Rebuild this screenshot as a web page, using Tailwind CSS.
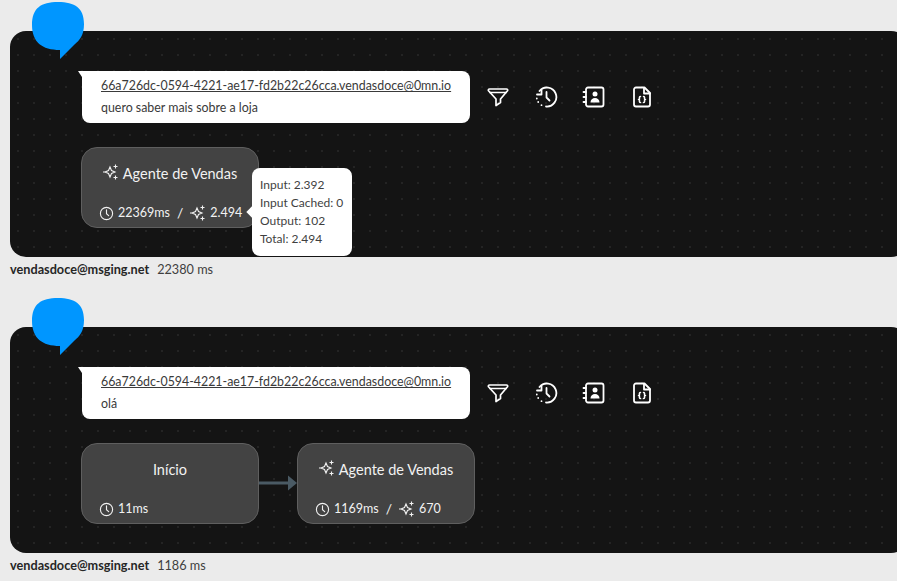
<!DOCTYPE html>
<html lang="pt">
<head>
  <meta charset="UTF-8" />
  <meta name="viewport" content="width=device-width, initial-scale=1.0"/>
  <title>Logs</title>
  <script src="https://cdn.jsdelivr.net/npm/@tailwindcss/browser@4"></script>
</head>
<body class="bg-[#ebebeb] font-['Lato',sans-serif] h-[581px] overflow-hidden">
  <main class="pl-[10px] pt-[31px] flex flex-col gap-[70px] w-[907px]">

    <!-- item 1 -->
    <section class="relative h-[226px]">
      <svg class="absolute left-[22px] top-[-29px] z-10" width="52" height="58" viewBox="0 0 52 58"><path d="M26 0C43 0 52 6 52 22C52 33 48 38 42 43L28 57V48C10 48 0 40 0 23C0 6 9 0 26 0Z" fill="#0096ff"/></svg>
      <div class="h-[226px] rounded-2xl bg-[#141414] bg-[radial-gradient(#242424_1px,transparent_1px)] bg-[length:16px_16px] pl-[72px] pt-[40px]">
        <div class="flex items-center">
          <div class="relative w-[388px] h-[52px] bg-white rounded-lg rounded-tl-none pl-[19px] pt-[5px] text-[12.4px] leading-[20px] text-[#3a3a3a]">
            <span class="absolute left-[-4px] top-0 w-0 h-0 border-t-[6px] border-t-white border-l-[4px] border-l-transparent"></span>
            <p class="underline whitespace-nowrap">66a726dc-0594-4221-ae17-fd2b22c26cca.vendasdoce@0mn.io</p>
            <p class="mt-[2px]">quero saber mais sobre a loja</p>
          </div>
          <div class="flex gap-[24px] ml-[16px] text-white">
            <svg class="size-6" viewBox="0 0 24 24" fill="none" stroke="currentColor" stroke-width="1.7" stroke-linejoin="round" stroke-linecap="round"><path d="M3.500 4h17c1 0 1.500 1 1 1.800L14.500 14v3.500l-4.500 3V14L2.500 5.800C2 5 2.500 4 3.500 4Z"/><path d="M4 7.500h16"/></svg>
            <svg class="size-6" viewBox="0 0 24 24" fill="none" stroke="currentColor" stroke-width="1.800" stroke-linejoin="round" stroke-linecap="round"><path d="M5.500 6A9.500 9.500 0 1 1 12 21.500"/><path d="M3 9.500h4.500V5"/><path d="M12.500 7v5.500l3 3"/><path d="M2.800 13.500v.01M4.200 17v.01M7.500 20.200v.01"/></svg>
            <svg class="size-6" viewBox="0 0 24 24" fill="none" stroke="currentColor" stroke-width="1.800" stroke-linejoin="round" stroke-linecap="round"><rect x="4" y="2.500" width="17.500" height="19" rx="2"/><path d="M1.500 7H4M1.500 12H4M1.500 17H4"/><circle cx="13" cy="9" r="2.500" fill="currentColor" stroke="none"/><path d="M8.500 17.500c0-3 2-4.500 4.500-4.500s4.500 1.500 4.500 4.500Z" fill="currentColor" stroke="none"/></svg>
            <svg class="size-6" viewBox="0 0 24 24" fill="none" stroke="currentColor" stroke-width="1.800" stroke-linejoin="round" stroke-linecap="round"><path d="M14.500 2.500H6a2 2 0 0 0-2 2v15a2 2 0 0 0 2 2h12a2 2 0 0 0 2-2V8Z"/><path d="M14 3v5.500h6"/><path d="M10.500 11.500c-1.500 0-1 2-1 2.500s-.5.500-1 .5c.5 0 1 0 1 .5s-.5 2.500 1 2.500M13.500 11.500c1.500 0 1 2 1 2.500s.5.500 1 .5c-.5 0-1 0-1 .5s.5 2.500-1 2.500" stroke-width="1.500"/></svg>
          </div>
        </div>
        <div class="relative ml-[-1px] mt-[24px] w-[178px] h-[81px] flex flex-col justify-between pt-[16px] pb-[4px] rounded-2xl bg-[#434343] border border-[#5f5f5f] text-[#f2f2f2]">
          <div class="flex justify-center items-center gap-[4px] text-[14.5px] leading-[20px]">
            <svg class="size-[16px] mt-[-4px]" viewBox="0 0 16 16" fill="none" stroke="currentColor" stroke-width="1.100"><path d="M7 3 8.500 6.500 12 8 8.500 9.500 7 13 5.500 9.500 2 8 5.500 6.500Z"/><path d="M12.500 .5v4M10.500 2.500h4M12.500 11.500v4M10.500 13.500h4M0 8h1.500"/></svg>
            <span>Agente de Vendas</span>
          </div>
          <div class="flex items-center gap-[4px] pl-[17px] text-[12.5px] leading-[20px]">
            <svg class="size-[15px]" viewBox="0 0 16 16" fill="none" stroke="currentColor" stroke-width="1.200" stroke-linecap="round"><circle cx="8" cy="8" r="6.500"/><path d="M8 4v4.300l2.300 2"/></svg>
            <span>22369ms</span>
            <span class="mx-[3px] text-[14px]">/</span>
            <svg class="size-[16px]" viewBox="0 0 16 16" fill="none" stroke="currentColor" stroke-width="1.100"><path d="M7 3 8.500 6.500 12 8 8.500 9.500 7 13 5.500 9.500 2 8 5.500 6.500Z"/><path d="M12.500 .5v4M10.500 2.500h4M12.500 11.500v4M10.500 13.500h4M0 8h1.500"/></svg>
            <span>2.494</span>
          </div>
          <div class="absolute left-[170px] top-[20px] z-10 w-[100px] h-[88px] bg-white rounded-lg pl-[8px] pt-[8px] text-[12px] leading-[18px] text-[#3f3f3f]">
            <span class="absolute left-[-4px] top-[40px] size-[8px] rotate-45 bg-white"></span>
            <p>Input: 2.392</p>
            <p class="whitespace-nowrap">Input Cached: 0</p>
            <p>Output: 102</p>
            <p>Total: 2.494</p>
          </div>
        </div>
      </div>
      <p class="mt-[4px] text-[12.7px] leading-[17px] text-[#3f3f3f]"><b class="text-[#262626]">vendasdoce@msging.net</b><span class="ml-[8px]">22380 ms</span></p>
    </section>

    <!-- item 2 -->
    <section class="relative h-[226px]">
      <svg class="absolute left-[22px] top-[-29px] z-10" width="52" height="58" viewBox="0 0 52 58"><path d="M26 0C43 0 52 6 52 22C52 33 48 38 42 43L28 57V48C10 48 0 40 0 23C0 6 9 0 26 0Z" fill="#0096ff"/></svg>
      <div class="h-[226px] rounded-2xl bg-[#141414] bg-[radial-gradient(#242424_1px,transparent_1px)] bg-[length:16px_16px] pl-[72px] pt-[40px]">
        <div class="flex items-center">
          <div class="relative w-[388px] h-[52px] bg-white rounded-lg rounded-tl-none pl-[19px] pt-[5px] text-[12.4px] leading-[20px] text-[#3a3a3a]">
            <span class="absolute left-[-4px] top-0 w-0 h-0 border-t-[6px] border-t-white border-l-[4px] border-l-transparent"></span>
            <p class="underline whitespace-nowrap">66a726dc-0594-4221-ae17-fd2b22c26cca.vendasdoce@0mn.io</p>
            <p class="mt-[2px]">olá</p>
          </div>
          <div class="flex gap-[24px] ml-[16px] text-white">
            <svg class="size-6" viewBox="0 0 24 24" fill="none" stroke="currentColor" stroke-width="1.7" stroke-linejoin="round" stroke-linecap="round"><path d="M3.500 4h17c1 0 1.500 1 1 1.800L14.500 14v3.500l-4.500 3V14L2.500 5.800C2 5 2.500 4 3.500 4Z"/><path d="M4 7.500h16"/></svg>
            <svg class="size-6" viewBox="0 0 24 24" fill="none" stroke="currentColor" stroke-width="1.800" stroke-linejoin="round" stroke-linecap="round"><path d="M5.500 6A9.500 9.500 0 1 1 12 21.500"/><path d="M3 9.500h4.500V5"/><path d="M12.500 7v5.500l3 3"/><path d="M2.800 13.500v.01M4.200 17v.01M7.500 20.200v.01"/></svg>
            <svg class="size-6" viewBox="0 0 24 24" fill="none" stroke="currentColor" stroke-width="1.800" stroke-linejoin="round" stroke-linecap="round"><rect x="4" y="2.500" width="17.500" height="19" rx="2"/><path d="M1.500 7H4M1.500 12H4M1.500 17H4"/><circle cx="13" cy="9" r="2.500" fill="currentColor" stroke="none"/><path d="M8.500 17.500c0-3 2-4.500 4.500-4.500s4.500 1.500 4.500 4.500Z" fill="currentColor" stroke="none"/></svg>
            <svg class="size-6" viewBox="0 0 24 24" fill="none" stroke="currentColor" stroke-width="1.800" stroke-linejoin="round" stroke-linecap="round"><path d="M14.500 2.500H6a2 2 0 0 0-2 2v15a2 2 0 0 0 2 2h12a2 2 0 0 0 2-2V8Z"/><path d="M14 3v5.500h6"/><path d="M10.500 11.500c-1.500 0-1 2-1 2.500s-.5.500-1 .5c.5 0 1 0 1 .5s-.5 2.500 1 2.500M13.500 11.500c1.500 0 1 2 1 2.500s.5.500 1 .5c-.5 0-1 0-1 .5s.5 2.500-1 2.500" stroke-width="1.500"/></svg>
          </div>
        </div>
        <div class="flex items-start ml-[-1px] mt-[24px]">
          <div class="w-[178px] h-[81px] flex flex-col justify-between pt-[16px] pb-[4px] rounded-2xl bg-[#434343] border border-[#5f5f5f] text-[#f2f2f2]">
            <div class="flex justify-center items-center text-[14.5px] leading-[20px]"><span>Início</span></div>
            <div class="flex items-center gap-[4px] pl-[17px] text-[12.5px] leading-[20px]">
              <svg class="size-[15px]" viewBox="0 0 16 16" fill="none" stroke="currentColor" stroke-width="1.200" stroke-linecap="round"><circle cx="8" cy="8" r="6.500"/><path d="M8 4v4.300l2.300 2"/></svg>
              <span>11ms</span>
            </div>
          </div>
          <svg class="mt-[32px]" width="38" height="16" viewBox="0 0 38 16"><path d="M0 8h30" stroke="#4a5a64" stroke-width="3"/><path d="M29 .5 38 8 29 15.500Z" fill="#4a5a64"/></svg>
          <div class="w-[178px] h-[81px] flex flex-col justify-between pt-[16px] pb-[4px] rounded-2xl bg-[#434343] border border-[#5f5f5f] text-[#f2f2f2]">
            <div class="flex justify-center items-center gap-[4px] text-[14.5px] leading-[20px]">
              <svg class="size-[16px] mt-[-4px]" viewBox="0 0 16 16" fill="none" stroke="currentColor" stroke-width="1.100"><path d="M7 3 8.500 6.500 12 8 8.500 9.500 7 13 5.500 9.500 2 8 5.500 6.500Z"/><path d="M12.500 .5v4M10.500 2.500h4M12.500 11.500v4M10.500 13.500h4M0 8h1.500"/></svg>
              <span>Agente de Vendas</span>
            </div>
            <div class="flex items-center gap-[4px] pl-[17px] text-[12.5px] leading-[20px]">
              <svg class="size-[15px]" viewBox="0 0 16 16" fill="none" stroke="currentColor" stroke-width="1.200" stroke-linecap="round"><circle cx="8" cy="8" r="6.500"/><path d="M8 4v4.300l2.300 2"/></svg>
              <span>1169ms</span>
              <span class="mx-[3px] text-[14px]">/</span>
              <svg class="size-[16px]" viewBox="0 0 16 16" fill="none" stroke="currentColor" stroke-width="1.100"><path d="M7 3 8.500 6.500 12 8 8.500 9.500 7 13 5.500 9.500 2 8 5.500 6.500Z"/><path d="M12.500 .5v4M10.500 2.500h4M12.500 11.500v4M10.500 13.500h4M0 8h1.500"/></svg>
              <span>670</span>
            </div>
          </div>
        </div>
      </div>
      <p class="mt-[4px] text-[12.7px] leading-[17px] text-[#3f3f3f]"><b class="text-[#262626]">vendasdoce@msging.net</b><span class="ml-[8px]">1186 ms</span></p>
    </section>

  </main>
</body>
</html>
